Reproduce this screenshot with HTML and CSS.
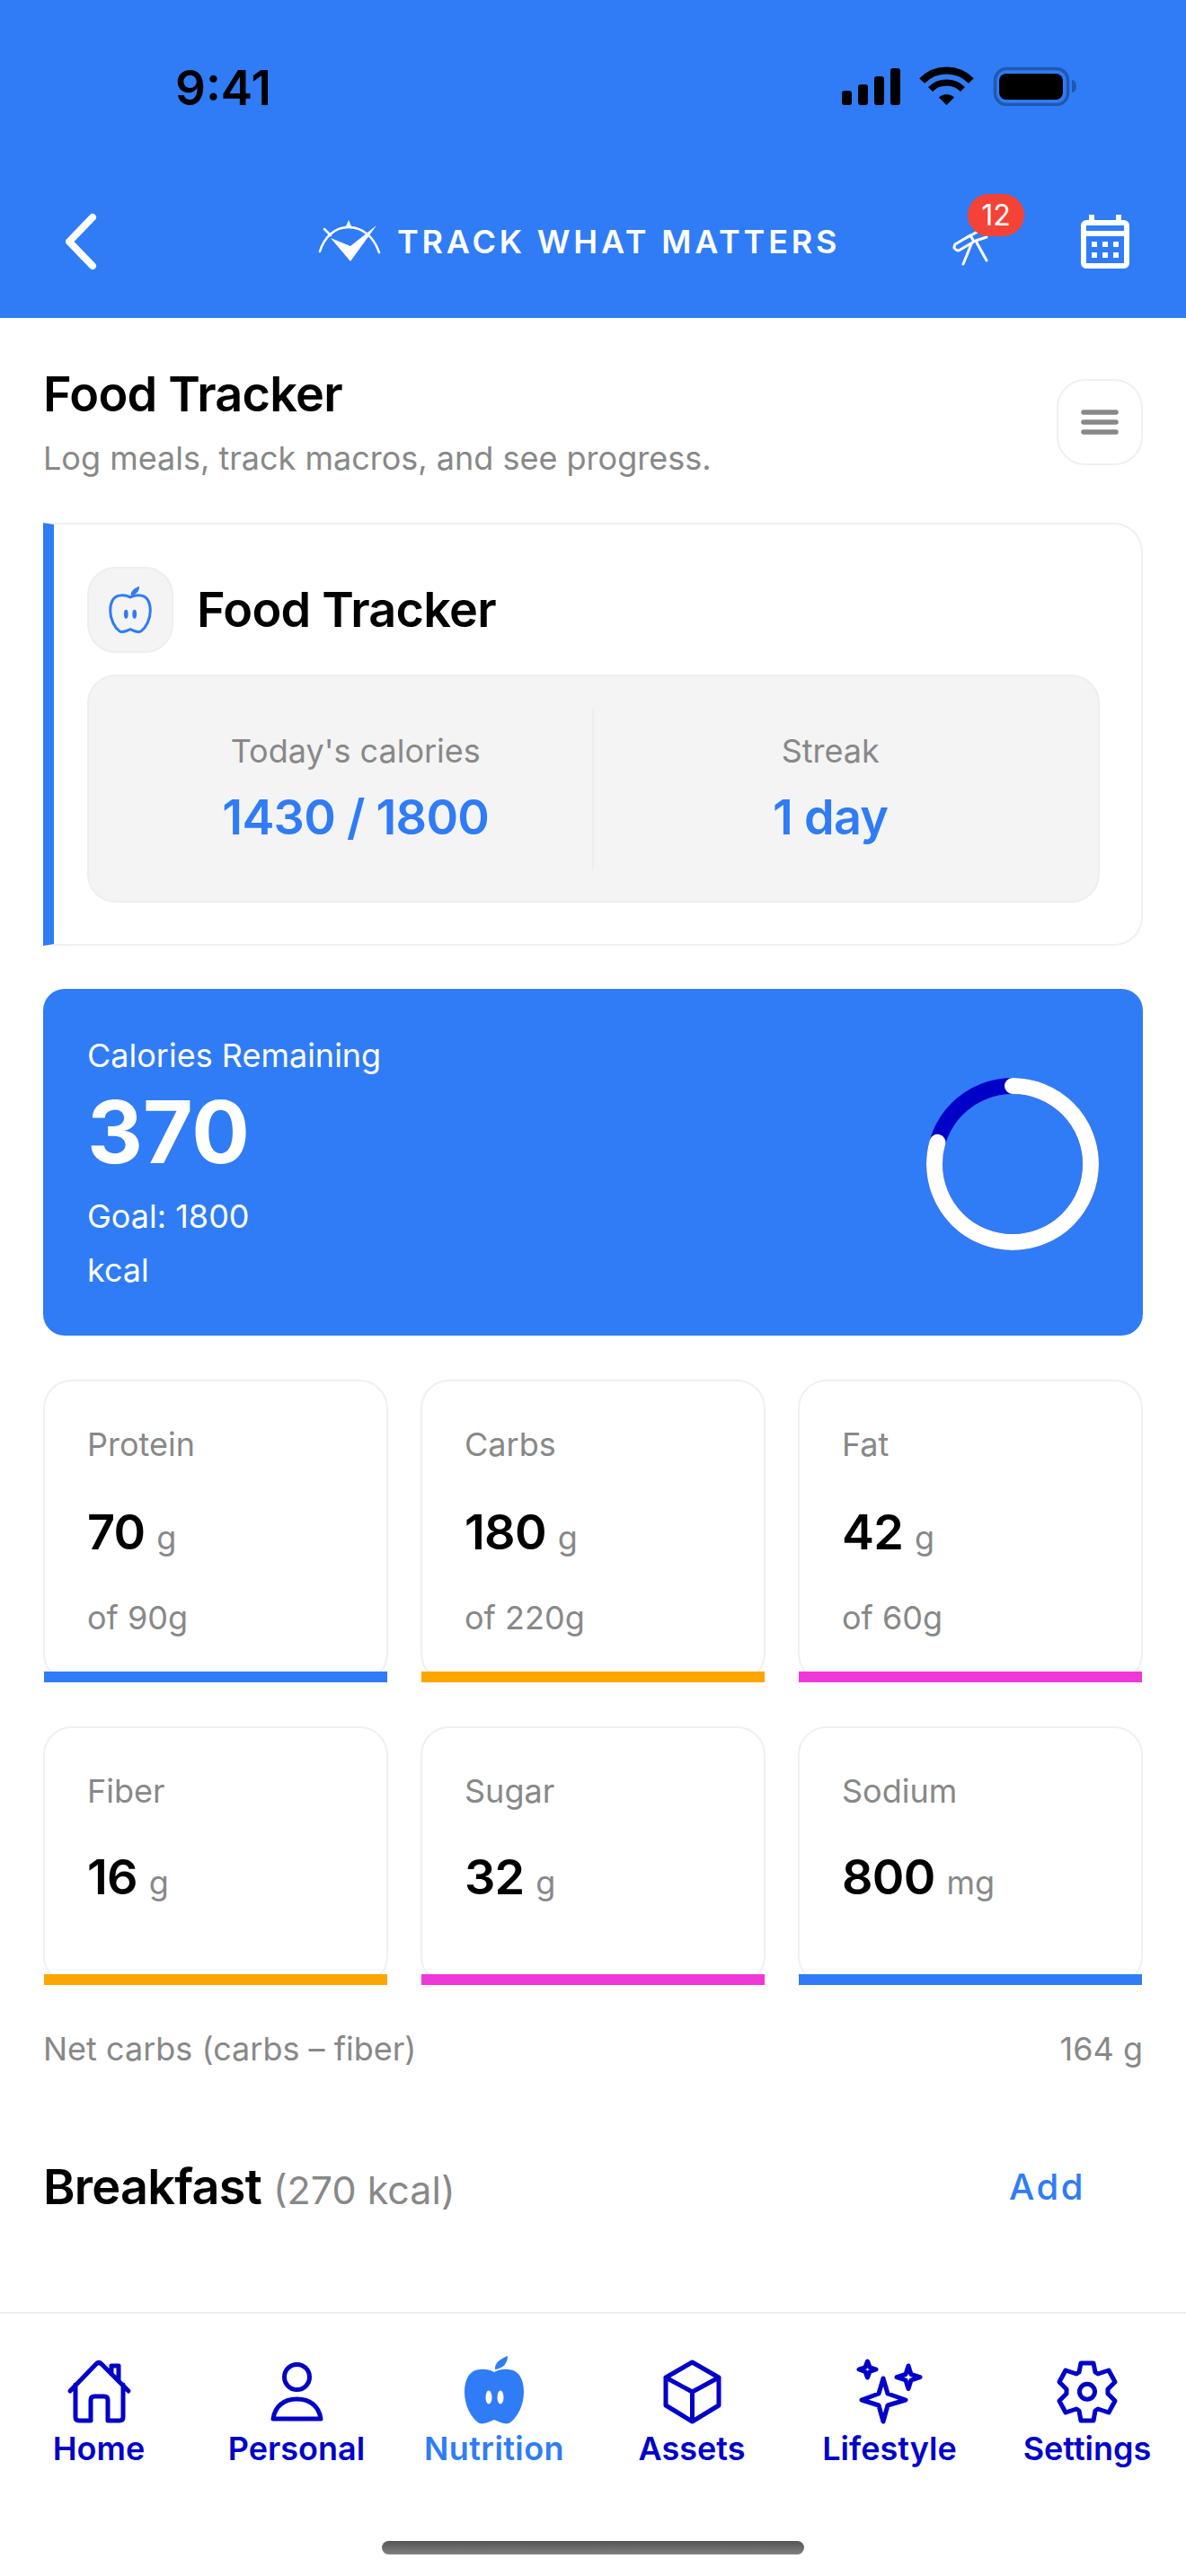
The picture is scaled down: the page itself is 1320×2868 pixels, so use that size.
FILE: index.html
```html
<!DOCTYPE html>
<html lang="en">
<head>
<meta charset="utf-8">
<title>Food Tracker</title>
<link rel="stylesheet" href="styles.css">
</head>
<body>
<div class="app">
  <header class="header">
    <div class="status">
      <span class="time">9:41</span>
      <svg class="status-icons" width="262" height="44" viewBox="937 74 262 44">
        <rect x="937" y="101" width="11" height="16" rx="3"/>
        <rect x="955" y="94" width="11" height="23" rx="3"/>
        <rect x="973" y="85" width="11" height="32" rx="3"/>
        <rect x="991" y="76" width="11" height="41" rx="3"/>
        <path class="wifi" d="M1026.1 90.1A38 38 0 0 1 1080.9 90.1" stroke-width="8"/>
        <path class="wifi" d="M1035.5 99.5A25.5 25.5 0 0 1 1071.5 99.5" stroke-width="7"/>
        <path d="M1053.5 117L1045 108.5A12 12 0 0 1 1062 108.5Z"/>
        <rect class="batt" x="1107.5" y="76.5" width="81" height="40" rx="13"/>
        <rect x="1112" y="82" width="71" height="29" rx="8"/>
        <path class="batt-cap" d="M1193 89C1196 89 1198 92 1198 96S1196 103 1193 103Z"/>
      </svg>
    </div>
    <nav class="nav">
      <svg class="back" width="35" height="64" viewBox="0 0 35 64"><path d="M30 5L4 32L30 59"/></svg>
      <div class="brand">
        <svg class="brand-mark" width="70" height="50" viewBox="354 246 70 50">
          <path class="brand-fill" d="M388 247L391 254L385 254Z"/>
          <path class="brand-arc" d="M356 282C361 266 372 255 388 255C404 255 416 266 422 283"/>
          <path class="brand-arc" d="M361 257L368 264"/>
          <path class="brand-fill" d="M368 267L390 276L419 253L390 293Z"/>
        </svg>
        <span class="brand-text">TRACK WHAT MATTERS</span>
      </div>
      <div class="nav-actions">
        <div class="scope">
          <svg width="44" height="44" viewBox="1058 256 44 44">
            <path class="scope-line" d="M1063 272L1080 262L1084 269L1067 279Q1064 279 1062 276Q1062 274 1063 272Z"/>
            <path class="scope-line" d="M1075 265L1090 257M1086 268L1098 264M1081 272L1072 294M1087 270L1098 290"/>
          </svg>
          <span class="badge">12</span>
        </div>
        <svg class="calendar" width="54" height="60" viewBox="1203 237 54 60">
          <path class="cal-body" fill-rule="evenodd" d="M1212 237H1218V243H1242V237H1248V243H1251A6 6 0 0 1 1257 249V291A6 6 0 0 1 1251 297H1209A6 6 0 0 1 1203 291V249A6 6 0 0 1 1209 243H1212ZM1209 249V255H1251V249ZM1209 261V291H1251V261Z"/>
          <path class="cal-body" d="M1215 267h6v6h-6zM1227 267h6v6h-6zM1239 267h6v6h-6zM1215 279h6v6h-6zM1227 279h6v6h-6zM1239 279h6v6h-6z"/>
        </svg>
      </div>
    </nav>
  </header>

  <main class="main">
    <div class="page-head">
      <div>
        <h1 class="title">Food Tracker</h1>
        <p class="subtitle">Log meals, track macros, and see progress.</p>
      </div>
      <button class="menu-btn" aria-label="Menu">
        <svg width="42" height="30" viewBox="0 0 42 30"><path d="M3 4H39M3 15H39M3 26H39"/></svg>
      </button>
    </div>

    <section class="tracker">
      <div class="tracker-head">
        <div class="tracker-icon">
          <svg width="54" height="54" viewBox="-4 -4 80 80">
            <path class="apple-line" d="M36 15C30 12 24 11 17 12.5C8 14 3 24 3 37C3 52 10 65 18 71C22 74 27 72 36 68C45 72 50 74 54 71C62 65 69 52 69 37C69 24 64 14 55 12.5C48 11 42 12 36 15Z"/>
            <path class="apple-fill" d="M37 12C36 5 43 0 51 -3C51 5 46 11 37 12Z"/>
            <ellipse class="apple-fill" cx="29" cy="43" rx="3.5" ry="7.5"/>
            <ellipse class="apple-fill" cx="43" cy="43" rx="3.5" ry="7.5"/>
          </svg>
        </div>
        <h2 class="title">Food Tracker</h2>
      </div>
      <div class="stats">
        <div class="stat stat-first">
          <span class="stat-label">Today's calories</span>
          <span class="stat-value">1430 / 1800</span>
        </div>
        <div class="stat">
          <span class="stat-label">Streak</span>
          <span class="stat-value">1 day</span>
        </div>
      </div>
    </section>

    <section class="remaining">
      <div class="remaining-text">
        <div class="rem-label">Calories Remaining</div>
        <div class="rem-number">370</div>
        <div class="rem-line">Goal: 1800</div>
        <div class="rem-line">kcal</div>
      </div>
      <svg class="ring" width="192" height="192" viewBox="0 0 192 192">
        <circle class="ring-used" cx="96" cy="96" r="87"/>
        <circle class="ring-track" cx="96" cy="96" r="87" pathLength="100" stroke-dasharray="79.5 100" transform="rotate(-90 96 96)"/>
      </svg>
    </section>

    <section class="macros">
      <div class="macro"><div class="macro-label">Protein</div><div class="macro-val">70 <small>g</small></div><div class="macro-of">of 90g</div><i class="bar bar-blue"></i></div>
      <div class="macro"><div class="macro-label">Carbs</div><div class="macro-val">180 <small>g</small></div><div class="macro-of">of 220g</div><i class="bar bar-orange"></i></div>
      <div class="macro"><div class="macro-label">Fat</div><div class="macro-val">42 <small>g</small></div><div class="macro-of">of 60g</div><i class="bar bar-pink"></i></div>
      <div class="macro macro-short"><div class="macro-label">Fiber</div><div class="macro-val">16 <small>g</small></div><i class="bar bar-orange"></i></div>
      <div class="macro macro-short"><div class="macro-label">Sugar</div><div class="macro-val">32 <small>g</small></div><i class="bar bar-pink"></i></div>
      <div class="macro macro-short"><div class="macro-label">Sodium</div><div class="macro-val">800 <small>mg</small></div><i class="bar bar-blue"></i></div>
    </section>

    <div class="net"><span>Net carbs (carbs – fiber)</span><span>164 g</span></div>

    <div class="meal">
      <h2 class="title">Breakfast <span class="meal-kcal">(270 kcal)</span></h2>
      <span class="meal-add">Add</span>
    </div>
  </main>

  <footer class="footer">
    <div class="tabs">
      <div class="tab">
        <svg class="tab-svg" width="80" height="80" viewBox="-4 -4 80 80"><path d="M4 36L33 6Q36 3 39 6L69 36M10 29V65Q10 69 14 69H27V46Q27 42 31 42H42Q46 42 46 46V69H59Q63 69 63 65V29M50 17V8H58V25"/></svg>
        <span>Home</span>
      </div>
      <div class="tab">
        <svg class="tab-svg" width="80" height="80" viewBox="-4 -4 80 80"><circle cx="36.5" cy="20.5" r="14"/><path d="M10 67C12 53 22 45 36.5 45C51 45 61 53 63 67Z"/></svg>
        <span>Personal</span>
      </div>
      <div class="tab tab-active">
        <svg width="80" height="80" viewBox="-4 -4 80 80">
          <path class="tab-apple" d="M36 15C30 12 24 11 17 12.5C8 14 3 24 3 37C3 52 10 65 18 71C22 74 27 72 36 68C45 72 50 74 54 71C62 65 69 52 69 37C69 24 64 14 55 12.5C48 11 42 12 36 15Z"/>
          <path class="tab-apple" d="M37 12C36 5 43 0 51 -3C51 5 46 11 37 12Z"/>
          <ellipse class="tab-eye" cx="30" cy="43" rx="3.5" ry="7.5"/>
          <ellipse class="tab-eye" cx="43" cy="43" rx="3.5" ry="7.5"/>
        </svg>
        <span>Nutrition</span>
      </div>
      <div class="tab">
        <svg class="tab-svg" width="80" height="80" viewBox="-4 -4 80 80"><path d="M36.5 4L66 21V52L36.5 70L7 52V21ZM7 21L36.5 37L66 21M36.5 37V70"/></svg>
        <span>Assets</span>
      </div>
      <div class="tab">
        <svg class="tab-svg" width="80" height="80" viewBox="-4 -4 80 80"><path d="M29 22L34 39L54 46L34 52L29 70L24 52L5 46L24 39ZM11.5 3L14 9.5L21 12L14 14.500L11.5 21L9 14.500L2 12L9 9.500ZM57 8L60 17.500L70 20.700L60 24L57 33.500L54 24L44 20.700L54 17.500Z"/></svg>
        <span>Lifestyle</span>
      </div>
      <div class="tab">
        <svg class="tab-svg" width="80" height="80" viewBox="-4 -4 80 80"><path d="M29 5H43L45 15L48 17L60 13L67 26L59 34V39L67 47L60 60L48 56L45 58L43 69H29L27 58L24 56L12 60L5 47L13 39V34L5 26L12 13L24 17L27 15Z"/><circle cx="36" cy="36.700" r="8.500"/></svg>
        <span>Settings</span>
      </div>
    </div>
    <div class="home-indicator"></div>
  </footer>
</div>
</body>
</html>
```

FILE: styles.css
```css
* { box-sizing: border-box; }
html, body { margin: 0; padding: 0; background: #fff; }
body { font-family: Inter, "Liberation Sans", sans-serif; color: #000; }
.app { width: 1320px; height: 2868px; display: flex; flex-direction: column; overflow: hidden; background: #fff; }

/* header */
.header { height: 354px; background: #2f7cf6; flex: none; }
.status { height: 194px; display: flex; align-items: center; justify-content: space-between; padding: 0 121px 0 195px; }
.time { font-size: 53px; font-weight: 600; line-height: 60px; margin-top: 2px; }
.status-icons { fill: #000; margin-top: -2px; }
.wifi { fill: none; stroke: #000; }
.batt { fill: none; stroke: #1f58ae; stroke-width: 3.500px; }
.batt-cap { fill: #1f58ae; }
.nav { height: 150px; display: flex; align-items: center; padding: 0 63px 0 73px; }
.back path { fill: none; stroke: #fff; stroke-width: 8px; stroke-linecap: round; stroke-linejoin: round; }
.brand { display: flex; align-items: center; gap: 18px; margin-left: 246px; }
.brand-fill { fill: #fff; }
.brand-arc { fill: none; stroke: #fff; stroke-width: 2.500px; stroke-linecap: round; }
.brand-text { color: #fff; font-size: 36px; font-weight: 600; letter-spacing: 3.800px; line-height: 44px; white-space: nowrap; }
.nav-actions { margin-left: auto; display: flex; align-items: center; gap: 101px; }
.scope { position: relative; width: 44px; height: 44px; margin-top: 18px; }
.scope-line { fill: none; stroke: #fff; stroke-width: 3px; stroke-linecap: round; stroke-linejoin: round; }
.badge { position: absolute; left: 19px; top: -40px; width: 63px; height: 47px; border-radius: 24px; background: #f44336; color: #fff; font-size: 32px; line-height: 47px; text-align: center; }
.cal-body { fill: #fff; }

/* main */
.main { flex: 1; padding: 51px 48px 0; overflow: hidden; }
.page-head { display: flex; align-items: center; justify-content: space-between; }
.title { margin: 0; font-size: 54px; font-weight: 600; line-height: 68px; letter-spacing: -0.750px; }
.subtitle { margin: 13px 0 0; font-size: 36px; line-height: 48px; color: #888; }
.menu-btn { width: 96px; height: 96px; padding: 0; border: 2px solid #f0f0f0; border-radius: 32px; background: #fff; display: flex; align-items: center; justify-content: center; }
.menu-btn path { fill: none; stroke: #888; stroke-width: 5.500px; stroke-linecap: round; }

.tracker { margin-top: 48px; border: 2px solid #f0f0f0; border-left: 12px solid #2f7cf6; border-radius: 0 32px 32px 0; padding: 47px 46px 46px 37px; }
.tracker-head { display: flex; align-items: center; gap: 26px; }
.tracker-icon { width: 96px; height: 96px; border: 2px solid #eee; border-radius: 32px; background: #f4f4f4; display: flex; align-items: center; justify-content: center; }
.apple-line { fill: none; stroke: #2f7cf6; stroke-width: 4.500px; stroke-linejoin: round; }
.apple-fill { fill: #2f7cf6; }
.stats { margin-top: 24px; height: 254px; border: 2px solid #eee; border-radius: 32px; background: #f4f4f4; padding: 36px 34px; display: grid; grid-template-columns: 1fr 1fr; }
.stat { height: 180px; padding-top: 23px; display: flex; flex-direction: column; align-items: center; gap: 16px; }
.stat-first { border-right: 2px solid #eee; }
.stat-label { font-size: 36px; line-height: 48px; color: #888; }
.stat-value { font-size: 54px; line-height: 68px; font-weight: 600; letter-spacing: -0.750px; color: #2f7cf6; }

.remaining { margin-top: 48px; height: 386px; border-radius: 24px; background: #2f7cf6; color: #fff; padding: 48px 49px 44px 49px; display: flex; align-items: center; justify-content: space-between; }
.rem-label { font-size: 36px; line-height: 53px; }
.rem-number { font-size: 96px; font-weight: 700; line-height: 116px; }
.rem-line { font-size: 36px; line-height: 60px; margin-top: 0; }
.rem-number + .rem-line { margin-top: 6px; }
.ring circle { fill: none; stroke-width: 18px; }
.ring-track { stroke: #fff; stroke-linecap: round; }
.ring-used { stroke: #0000c8; }

.macros { margin-top: 49px; display: grid; grid-template-columns: repeat(3, 384px); column-gap: 36px; row-gap: 49px; }
.macro { position: relative; border: 2px solid #f0f0f0; border-radius: 32px; padding: 46px 47px 46px; }
.macro-label { font-size: 36px; line-height: 48px; color: #888; }
.macro-val { margin-top: 40px; margin-bottom: 37px; font-size: 54px; font-weight: 600; line-height: 68px; letter-spacing: -0.750px; }
.macro-val small { font-size: 36px; font-weight: 400; line-height: 0; letter-spacing: 0; color: #888; }
.macro-of { font-size: 36px; line-height: 48px; color: #888; }
.macro-short .macro-val { margin-top: 38px; margin-bottom: 38px; }
.bar { position: absolute; left: -1px; right: -1px; bottom: -2px; height: 12px; }
.bar-blue { background: #2f7cf6; }
.bar-orange { background: #ffa500; }
.bar-pink { background: #f038d8; }

.net { margin-top: 47px; display: flex; justify-content: space-between; font-size: 36px; line-height: 48px; color: #888; }
.meal { margin-top: 96px; padding-right: 64px; display: flex; align-items: center; justify-content: space-between; }
.meal-kcal { font-size: 43px; font-weight: 400; color: #888; letter-spacing: 0; }
.meal-add { font-size: 40px; font-weight: 500; letter-spacing: 2.500px; color: #2f7cf6; margin-top: -4px; }

/* footer */
.footer { flex: none; height: 294px; border-top: 2px solid #eee; background: #fff; }
.tabs { display: grid; grid-template-columns: repeat(6, 220px); padding-top: 46px; }
.tab { display: flex; flex-direction: column; align-items: center; color: #0000c8; font-size: 36px; font-weight: 600; line-height: 44px; }
.tab > span { margin-top: 2px; }
.tab-active { color: #2f7cf6; letter-spacing: 0.400px; }
.tab-svg { fill: none; stroke: #0000c8; stroke-width: 5px; stroke-linejoin: round; stroke-linecap: round; }
.tab-apple { fill: #2f7cf6; }
.tab-eye { fill: #fff; }
.home-indicator { width: 470px; height: 15px; margin: 81px auto 0; border-radius: 8px; background: linear-gradient(#555, #808080); }
```
